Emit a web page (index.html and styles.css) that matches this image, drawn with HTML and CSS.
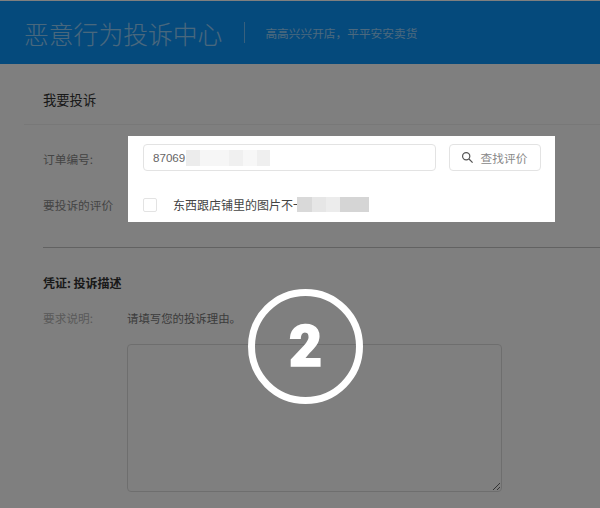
FILE: index.html
```html
<!DOCTYPE html>
<html lang="zh-CN">
<head>
<meta charset="utf-8">
<title>恶意行为投诉中心</title>
<link rel="stylesheet" href="styles.css">
</head>
<body>
<header class="top">
  <h1 class="top-title">恶意行为投诉中心</h1>
  <span class="top-sep"></span>
  <p class="top-slogan">高高兴兴开店，平平安安卖货</p>
</header>
<main class="page">
  <h2 class="page-title">我要投诉</h2>
  <section class="form">
    <div class="labels">
      <span class="label">订单编号:</span>
      <span class="label">要投诉的评价</span>
    </div>
    <div class="spot">
      <div class="search">
        <div class="input"><span>87069</span><span class="blur blur-a"><i></i><i></i><i></i><i></i><i></i></span></div>
        <button class="btn" type="button">
          <svg class="btn-icon" viewBox="0 0 14 14" width="13" height="13" aria-hidden="true"><circle cx="5.6" cy="5.6" r="3.9"/><path d="M8.6 8.6l3.9 3.9"/></svg>
          <span>查找评价</span>
        </button>
      </div>
      <div class="review">
        <span class="check"></span>
        <span class="review-text">东西跟店铺里的图片不一</span><span class="blur blur-b"><i></i><i></i><i></i><i></i></span>
      </div>
    </div>
  </section>
  <hr class="rule">
  <h3 class="proof">凭证: 投诉描述</h3>
  <div class="req">
    <span class="req-label">要求说明:</span>
    <span class="req-text">请填写您的投诉理由。</span>
  </div>
  <textarea class="area"></textarea>
</main>
<div class="overlay"></div>
<div class="step"><span>2</span></div>
</body>
</html>
```
FILE: styles.css
```css
* { box-sizing: border-box; }
html, body { margin: 0; height: 100%; }
body {
  width: 600px;
  height: 508px;
  overflow: hidden;
  background: #fff;
  position: relative;
  font-family: "Noto Sans CJK SC", "Liberation Sans", sans-serif;
  font-size: 12px;
  color: #333;
}
.top {
  height: 63px;
  margin-top: 1px;
  padding-left: 24px;
  background: #0a94f8;
  display: flex;
  align-items: center;
  color: #fff;
}
.top-title {
  margin: 0;
  font-size: 24.8px;
  font-weight: 300;
  line-height: 32px;
  opacity: .56;
}
.top-sep {
  width: 1px;
  height: 21px;
  margin: 0 20px 0 22px;
  background: #fff;
  opacity: .42;
}
.top-slogan {
  margin: 0;
  font-size: 11.7px;
  opacity: .58;
}
.page { padding: 0 0 0 24px; }
.page-title {
  margin: 0;
  height: 61px;
  padding: 26px 0 0 19px;
  font-size: 13.3px;
  line-height: 20px;
  font-weight: 400;
  color: #333;
  border-bottom: 1px solid #f0f0f0;
}
.form {
  display: grid;
  grid-template-columns: 85px 427px;
  margin: 11px 0 0 19px;
  height: 86px;
}
.labels {
  display: flex;
  flex-direction: column;
  gap: 28px;
  padding-top: 14px;
  font-size: 11.7px;
}
.label {
  line-height: 18px;
  color: #888;
}
.spot {
  position: relative;
  z-index: 2;
  background: #fff;
  padding: 8px 14px 0 15px;
}
.search { display: flex; gap: 13px; }
.input {
  width: 293px;
  height: 27px;
  padding: 0 9px;
  border: 1px solid #e3e3e3;
  border-radius: 4px;
  display: flex;
  align-items: center;
  font-family: "Liberation Sans", sans-serif;
  color: #666;
  font-size: 11.6px;
}
.btn {
  width: 92px;
  height: 27px;
  padding: 0 2px 0 0;
  border: 1px solid #e3e3e3;
  border-radius: 4px;
  background: #fff;
  display: flex;
  align-items: center;
  justify-content: center;
  gap: 7px;
  font: inherit;
  font-size: 11.7px;
  color: #888;
}
.btn-icon { fill: none; stroke: #555; stroke-width: 1.3; }
.review {
  display: flex;
  align-items: center;
  margin-top: 24px;
  height: 19px;
}
.check {
  width: 14px;
  height: 14px;
  margin-right: 16px;
  border: 1px solid #e3e3e3;
  border-radius: 2px;
  background: #fff;
}
.review-text { color: #444; }
.blur { display: inline-flex; height: 16px; margin-left: 1px; }
.blur i { display: block; height: 100%; }
.blur-a { width: 84px; }
.blur-a i:nth-child(1) { width: 14px; background: #ececec; }
.blur-a i:nth-child(2) { width: 29px; background: #f6f6f6; }
.blur-a i:nth-child(3) { width: 14px; background: #f0f0f0; }
.blur-a i:nth-child(4) { width: 14px; background: #f7f7f7; }
.blur-a i:nth-child(5) { width: 13px; background: #efefef; }
.blur-b { width: 72px; height: 15px; margin-left: -8px; }
.blur-b i:nth-child(1) { width: 15px; background: #d9d9d9; }
.blur-b i:nth-child(2) { width: 14px; background: #e6e6e6; }
.blur-b i:nth-child(3) { width: 14px; background: #ececec; }
.blur-b i:nth-child(4) { width: 29px; background: #d5d5d5; }
.rule {
  margin: 25px 0 0 19px;
  border: 0;
  border-top: 1px solid #c4c4c4;
}
.proof {
  margin: 26px 0 0 19px;
  font-size: 12px;
  line-height: 18px;
  font-weight: 700;
  color: #333;
}
.req {
  display: flex;
  margin: 17px 0 0 19px;
  line-height: 18px;
  font-size: 11.7px;
}
.req-label { width: 84px; color: #b4b4b4; }
.req-text { color: #777; font-size: 11.4px; }
.area {
  display: block;
  width: 375px;
  height: 148px;
  margin: 17px 0 0 103px;
  border: 1px solid #ddd;
  border-radius: 4px;
  background: #fff;
}
.overlay {
  position: absolute;
  inset: 0;
  z-index: 1;
  background: rgba(0, 0, 0, .5);
}
.step {
  position: absolute;
  z-index: 3;
  left: 248px;
  top: 289px;
  width: 115px;
  height: 115px;
  border: 7px solid #fff;
  border-radius: 50%;
  display: flex;
  align-items: center;
  justify-content: center;
  color: #fff;
  font-family: Roboto, "Liberation Sans", sans-serif;
  font-weight: 900;
  font-size: 57px;
  line-height: 1;
}
.step span { -webkit-text-stroke: 1.5px #fff; }
```
